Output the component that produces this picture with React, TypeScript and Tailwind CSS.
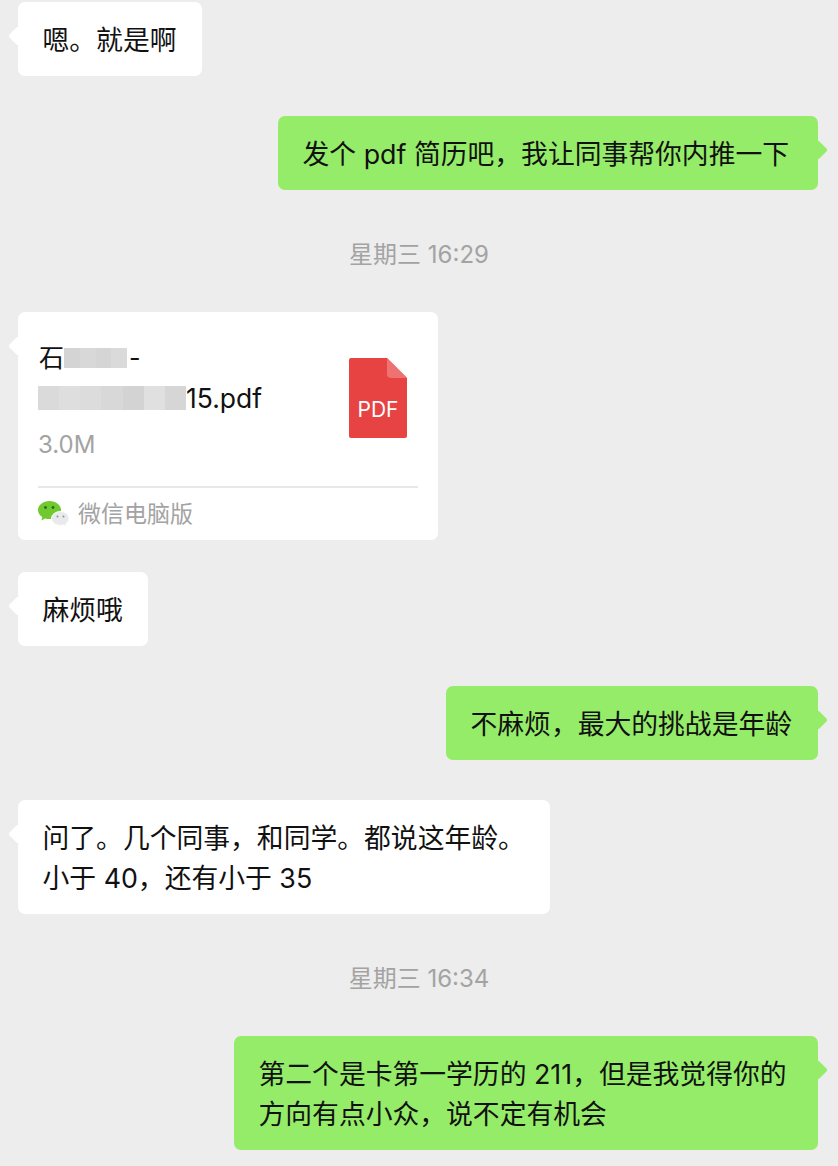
import React from "react";

function Tail({ side, color }: { side: "left" | "right"; color: string }) {
  return (
    <span
      className={`absolute top-[27px] h-[14px] w-[14px] rotate-45 rounded-[2px] ${color} ${
        side === "left" ? "left-[-7px]" : "right-[-7px]"
      }`}
    />
  );
}

function Incoming({ width, children, className = "" }: { width: string; children: React.ReactNode; className?: string }) {
  return (
    <div className={`relative self-start whitespace-nowrap rounded-[7px] bg-white pt-[18px] pb-[16px] pl-[24.5px] pr-[24px] text-[26.8px] leading-[40px] text-[#111111] ${width} ${className}`}>
      <Tail side="left" color="bg-white" />
      {children}
    </div>
  );
}

function Outgoing({ width, children, className = "" }: { width: string; children: React.ReactNode; className?: string }) {
  return (
    <div className={`relative self-end whitespace-nowrap rounded-[7px] bg-[#95ec69] pt-[18px] pb-[16px] pl-[24.5px] pr-[24px] text-[26.8px] leading-[40px] text-[#111111] ${width} ${className}`}>
      <Tail side="right" color="bg-[#95ec69]" />
      {children}
    </div>
  );
}

function Time({ children }: { children: React.ReactNode }) {
  return (
    <div className="mt-[47px] mb-[39px] flex h-[36px] items-center justify-center whitespace-nowrap text-[24px] text-[#a3a3a3]">
      {children}
    </div>
  );
}

const shadesA = ["bg-[#d4d4d4]", "bg-[#d8d8d8]", "bg-[#d5d5d5]", "bg-[#dadada]"];
const shadesB = ["bg-[#dadada]", "bg-[#dedede]", "bg-[#dcdcdc]", "bg-[#d8d8d8]", "bg-[#d3d3d3]", "bg-[#e0e0e0]", "bg-[#d6d6d6]"];

function Mosaic({ shades, height }: { shades: string[]; height: string }) {
  return (
    <span className={`flex w-full blur-[0.5px] ${height}`}>
      {shades.map((s, i) => (
        <span key={i} className={`h-full flex-1 ${s}`} />
      ))}
    </span>
  );
}

function PdfIcon() {
  return (
    <div className="relative h-[80px] w-[58px] shrink-0">
      <svg viewBox="0 0 58 80" className="absolute inset-0 h-full w-full">
        <path d="M2 0H38L58 20V78a2 2 0 0 1-2 2H2a2 2 0 0 1-2-2V2a2 2 0 0 1 2-2Z" fill="#e84343" />
        <path d="M38 0L58 20H42a4 4 0 0 1-4-4Z" fill="#ef7272" />
      </svg>
      <div className="absolute inset-x-0 top-[39px] text-center text-[21px] leading-[26px] text-white">PDF</div>
    </div>
  );
}

function WeChatIcon() {
  return (
    <svg viewBox="0 0 32 26" className="h-[26px] w-[32px] shrink-0">
      <path d="M11.5 0C5.2 0 0 4 0 9c0 2.900 1.700 5.400 4.300 7l-1 3.400 3.900-2c1.400.4 2.800.6 4.300.6 6.300 0 11.500-4 11.500-9S17.800 0 11.500 0Z" fill="#6fc92f" />
      <circle cx="7.500" cy="6.500" r="1.400" fill="#2f6b12" />
      <circle cx="15" cy="6.500" r="1.400" fill="#2f6b12" />
      <path d="M22.500 10.500c-5 0-9 3.100-9 7s4 7 9 7c1 0 2-.1 3-.4l3 1.600-.7-2.800c1.800-1.300 3.200-3.200 3.200-5.400 0-3.900-4-7-8.500-7Z" fill="#e9eaec" stroke="#ffffff" strokeWidth="1" />
      <circle cx="19.500" cy="15.500" r="1" fill="#8d8f93" />
      <circle cx="25.500" cy="15.500" r="1" fill="#8d8f93" />
    </svg>
  );
}

export default function App() {
  return (
    <div
      className="flex h-[1166px] w-[838px] flex-col overflow-hidden bg-[#ededed] px-[20px] pt-[2px] antialiased"
      style={{ fontFamily: 'Inter, "Noto Sans CJK SC", sans-serif' }}
    >
      <Incoming width="w-[184px]" className="ml-[-2px]">嗯。就是啊</Incoming>
      <Outgoing width="w-[540px]" className="mt-[40px]">发个 pdf 简历吧，我让同事帮你内推一下</Outgoing>

      <Time>星期三 16:29</Time>

      <div className="relative ml-[-2px] h-[228px] w-[420px] self-start rounded-[7px] bg-white px-[20px]">
        <Tail side="left" color="bg-white" />
        <div className="flex h-[176px] justify-between border-b-2 border-[#e8e8e8] pt-[26px]">
          <div className="text-[25px] leading-[40px] text-[#111111]">
            <div className="flex items-center whitespace-nowrap pl-[1px]">
              石
              <span className="w-[63px]">
                <Mosaic shades={shadesA} height="h-[20px]" />
              </span>
              <span className="ml-[2px]">-</span>
            </div>
            <div className="flex items-center whitespace-nowrap">
              <span className="w-[148px]">
                <Mosaic shades={shadesB} height="h-[24px]" />
              </span>
              <span className="text-[26.5px]">15.pdf</span>
            </div>
            <div className="mt-[7px] text-[24px] leading-[40px] text-[#a3a3a3]">3.0M</div>
          </div>
          <div className="mr-[11px] pt-[20px]">
            <PdfIcon />
          </div>
        </div>
        <div className="flex h-[52px] items-center gap-[8px] whitespace-nowrap text-[23px] text-[#a3a3a3]">
          <WeChatIcon />
          微信电脑版
        </div>
      </div>

      <Incoming width="w-[130px]" className="ml-[-2px] mt-[32px]">麻烦哦</Incoming>
      <Outgoing width="w-[372px]" className="mt-[40px]">不麻烦，最大的挑战是年龄</Outgoing>
      <Incoming width="w-[532px]" className="ml-[-2px] mt-[40px]">
        问了。几个同事，和同学。都说这年龄。
        <br />
        小于 40，还有小于 35
      </Incoming>

      <Time>星期三 16:34</Time>

      <Outgoing width="w-[584px]">
        第二个是卡第一学历的 211，但是我觉得你的
        <br />
        方向有点小众，说不定有机会
      </Outgoing>
    </div>
  );
}
